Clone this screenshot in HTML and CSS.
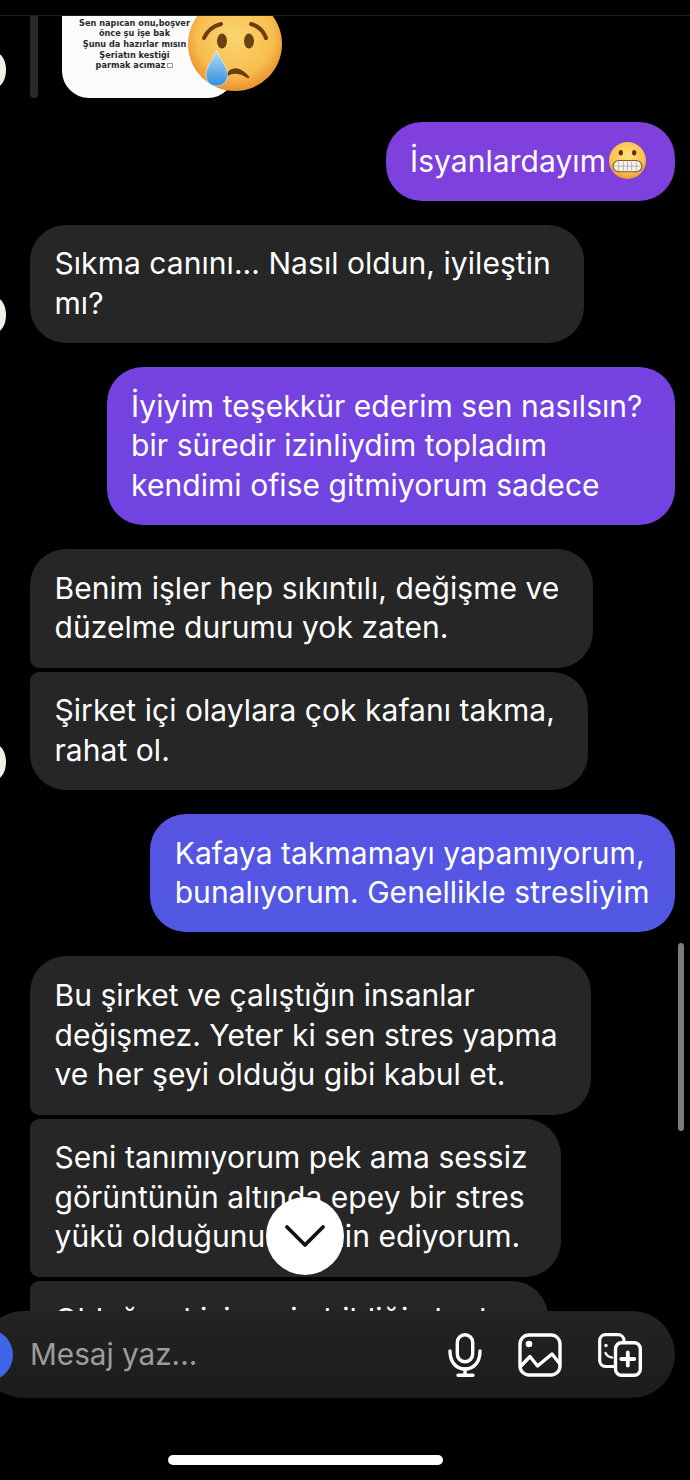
FILE: index.html
```html
<!DOCTYPE html>
<html lang="tr">
<head>
<meta charset="utf-8">
<title>Mesajlar</title>
<link rel="stylesheet" href="styles.css">
</head>
<body>
<div class="screen">
  <div class="thread">
    <div class="reply-row">
      <div class="reply-bar"></div>
      <div class="story">
        <div class="story-card">
          <p>Sen napıcan onu,boşver</p>
          <p>önce şu işe bak</p>
          <p>Şunu da hazırlar mısın</p>
          <p>Şeriatın kestiği</p>
          <p>parmak acımaz<span class="tofu"></span></p>
        </div>
        <svg class="cry" viewBox="0 0 94 76" aria-hidden="true">
          <defs>
            <radialGradient id="face" cx="0.5" cy="0.42" r="0.6">
              <stop offset="0" stop-color="#fad672"/>
              <stop offset="0.68" stop-color="#f8bd4e"/>
              <stop offset="1" stop-color="#e98a2a"/>
            </radialGradient>
            <linearGradient id="drop" x1="0" y1="0" x2="0" y2="1">
              <stop offset="0" stop-color="#b5e0f5"/>
              <stop offset="1" stop-color="#2f8ee0"/>
            </linearGradient>
          </defs>
          <circle cx="47" cy="28" r="47" fill="url(#face)"/>
          <path d="M16 22 Q21 11 33 8" fill="none" stroke="#6a3d10" stroke-width="4" stroke-linecap="round"/>
          <path d="M78 22 Q74 11 63 8" fill="none" stroke="#6a3d10" stroke-width="4" stroke-linecap="round"/>
          <ellipse cx="34" cy="25" rx="5" ry="7.500" fill="#6a4212"/>
          <ellipse cx="61" cy="25" rx="5" ry="7.500" fill="#6a4212"/>
          <path d="M39 59 Q47 47 60 61 Q48 53 39 59Z" fill="#6a3d10" stroke="#6a3d10" stroke-width="2.500" stroke-linejoin="round"/>
          <path d="M28.500 34 C32 44 39.500 50 39.500 59 C39.500 66 34.500 70 28.500 70 C22.500 70 18 66 18 59 C18 50 25 44 28.500 34Z" fill="url(#drop)" stroke="#e8f4fa" stroke-width="0.600"/>
        </svg>
      </div>
    </div>

    <div class="msg sent first">İsyanlardayım<svg class="grimace" viewBox="0 0 36 36" aria-hidden="true">
        <defs>
          <radialGradient id="gface" cx="0.5" cy="0.38" r="0.65">
            <stop offset="0" stop-color="#fde27c"/>
            <stop offset="0.7" stop-color="#fbbf4c"/>
            <stop offset="1" stop-color="#ec9030"/>
          </radialGradient>
        </defs>
        <circle cx="18" cy="18" r="18" fill="url(#gface)"/>
        <ellipse cx="11.500" cy="10.500" rx="2.100" ry="2.600" fill="#5c3410"/>
        <ellipse cx="24.500" cy="10.500" rx="2.100" ry="2.600" fill="#5c3410"/>
        <rect x="4" y="18" width="28" height="11" rx="5.500" fill="#f5f2ec" stroke="#7a5a30" stroke-width="1.100"/>
        <path d="M4.500 23.500H31.500M9.500 18.500V28.500M14 18V29M18 18V29M22 18V29M26.500 18.500V28.500" stroke="#a8a398" stroke-width="0.700" fill="none"/>
      </svg></div>

    <div class="msg recv gap">Sıkma canını... Nasıl oldun, iyileştin<br>mı?</div>

    <div class="msg sent gap">İyiyim teşekkür ederim sen nasılsın?<br>bir süredir izinliydim topladım<br>kendimi ofise gitmiyorum sadece</div>

    <div class="msg recv gap group-start">Benim işler hep sıkıntılı, değişme ve<br>düzelme durumu yok zaten.</div>
    <div class="msg recv tight group-end">Şirket içi olaylara çok kafanı takma,<br>rahat ol.</div>

    <div class="msg sent snug gap">Kafaya takmamayı yapamıyorum,<br>bunalıyorum. Genellikle stresliyim</div>

    <div class="msg recv gap group-start">Bu şirket ve çalıştığın insanlar<br>değişmez. Yeter ki sen stres yapma<br>ve her şeyi olduğu gibi kabul et.</div>
    <div class="msg recv tight group-mid">Seni tanımıyorum pek ama sessiz<br>görüntünün altında epey bir stres<br>yükü olduğunu tahmin ediyorum.</div>
    <div class="msg recv tight group-end">Olduğun kişi senin bildiğin kadar</div>
  </div>

  <div class="topline"></div>
  <div class="avatar avatar-a"></div>
  <div class="avatar avatar-b"></div>
  <div class="avatar avatar-c"></div>
  <div class="scrollbar"></div>

  <div class="jump">
    <svg viewBox="0 0 44 26" aria-hidden="true"><path d="M4 4 L22 22 L40 4" fill="none" stroke="#111" stroke-width="3.800" stroke-linecap="round" stroke-linejoin="round"/></svg>
  </div>

  <div class="composer">
    <div class="camera"></div>
    <div class="placeholder">Mesaj yaz...</div>
    <div class="tools">
      <svg class="tool mic" viewBox="0 0 34 44" aria-hidden="true">
        <rect x="9.300" y="1.700" width="15.400" height="27" rx="7.700" fill="none" stroke="#fff" stroke-width="3.400"/>
        <path d="M2 18 C2 29 8 36 17 36 C26 36 32 29 32 18" fill="none" stroke="#fff" stroke-width="3.400" stroke-linecap="round"/>
        <path d="M17 36V42M10 42.300H25" fill="none" stroke="#fff" stroke-width="3.400" stroke-linecap="round"/>
      </svg>
      <svg class="tool gallery" viewBox="0 0 44 44" aria-hidden="true">
        <rect x="2" y="2" width="40" height="40" rx="9" fill="none" stroke="#fff" stroke-width="3.400"/>
        <circle cx="11" cy="11" r="3.300" fill="#fff"/>
        <path d="M3 33 L12 23.500 L19.500 33 L34 21 L42 31" fill="none" stroke="#fff" stroke-width="3.400" stroke-linejoin="round"/>
      </svg>
      <svg class="tool sticker" viewBox="0 0 44 44" aria-hidden="true">
        <path d="M15.500 33.500H7.500 A6 6 0 0 1 1.700 27.500V7.500 A6 6 0 0 1 7.500 1.700H20 A6 6 0 0 1 26 7.500" fill="none" stroke="#fff" stroke-width="3.200" stroke-linecap="round"/>
        <rect x="17.500" y="9.700" width="24.800" height="32.600" rx="6" fill="none" stroke="#fff" stroke-width="3.400"/>
        <path d="M29.800 19.500V32.500M23.300 26H36.300" fill="none" stroke="#fff" stroke-width="3.800" stroke-linecap="round"/>
        <circle cx="8" cy="12.500" r="1.700" fill="#fff"/>
        <path d="M7.500 20 Q9.500 24 14 24.500" fill="none" stroke="#fff" stroke-width="2.400" stroke-linecap="round"/>
      </svg>
    </div>
  </div>

  <div class="home-bar"></div>
</div>
</body>
</html>
```

FILE: styles.css
```css
* { box-sizing: border-box; }

html, body {
  margin: 0;
  padding: 0;
  background: #000;
}

.screen {
  position: relative;
  width: 690px;
  height: 1480px;
  overflow: hidden;
  background: #000;
  font-family: Inter, "Noto Sans", sans-serif;
  color: #fff;
}

.thread {
  display: flex;
  flex-direction: column;
  align-items: flex-start;
  padding: 16px 15px 0 30px;
  height: 1311px;
  overflow: hidden;
}

.reply-row {
  display: flex;
  gap: 24px;
  height: 82px;
  flex: none;
}

.reply-bar {
  width: 8px;
  height: 82px;
  background: #2a2a2a;
  border-radius: 0 0 4px 4px;
}

.story {
  position: relative;
  width: 220px;
  height: 82px;
  overflow: hidden;
}

.story-card {
  width: 173px;
  height: 82px;
  background: #fbfbfb;
  border-radius: 0 0 27px 27px;
  color: #2b2b2b;
  font-family: "DejaVu Sans", sans-serif;
  font-size: 8.200px;
  font-weight: 700;
  line-height: 10.700px;
  text-align: center;
  padding: 1.500px 28px 0 0;
}

.story-card p {
  margin: 0;
  white-space: nowrap;
}

.tofu {
  display: inline-block;
  width: 6px;
  height: 5px;
  margin-left: 2px;
  border: 1px solid #999;
}

.cry {
  position: absolute;
  left: 126px;
  top: 0;
  width: 94px;
  height: 76px;
}

.msg {
  flex: none;
  padding: 19.500px 33.500px 19.500px 24.500px;
  font-size: 30px;
  line-height: 39.700px;
  letter-spacing: 0.050px;
  border-radius: 36px;
  white-space: nowrap;
}

.recv {
  background: #262626;
}

.sent {
  align-self: flex-end;
  padding-right: 32.500px;
  background: linear-gradient(180deg, #8040dc 110px, #7044e2 520px, #4f59e4 940px) fixed;
}

.snug { padding-right: 25.500px; }

.first { margin-top: 24px; }
.gap { margin-top: 24px; }
.tight { margin-top: 4px; }

.group-start { border-bottom-left-radius: 9px; }
.group-mid { border-top-left-radius: 9px; border-bottom-left-radius: 9px; }
.group-end { border-top-left-radius: 9px; }

.grimace {
  width: 37px;
  height: 37px;
  margin: -6px -3.500px -6px 3px;
  vertical-align: -1px;
}

.topline {
  position: absolute;
  left: 0;
  right: 0;
  top: 15px;
  height: 1px;
  background: #1c1c1c;
}

.avatar {
  position: absolute;
  left: -14px;
  width: 20px;
  height: 34px;
  border-radius: 50%;
  background: linear-gradient(135deg, #dff2f4, #f5f3e0);
}

.avatar-a { top: 53px; }
.avatar-b { top: 298px; }
.avatar-c { top: 745px; }

.scrollbar {
  position: absolute;
  left: 678px;
  top: 943px;
  width: 6px;
  height: 188px;
  border-radius: 3px;
  background: #7c7c7c;
}

.jump {
  position: absolute;
  left: 266px;
  top: 1197px;
  width: 78px;
  height: 78px;
  border-radius: 50%;
  background: #fff;
  display: flex;
  align-items: center;
  justify-content: center;
}

.jump svg {
  width: 44px;
  height: 26px;
}

.composer {
  position: absolute;
  left: -20px;
  top: 1311px;
  width: 695px;
  height: 87px;
  border-radius: 43.500px;
  background: linear-gradient(180deg, #232323, #1c1c1c);
  display: flex;
  align-items: center;
}

.camera {
  width: 52px;
  height: 52px;
  margin-left: -19px;
  border-radius: 50%;
  background: #3f66e6;
  flex: none;
}

.placeholder {
  margin: -2px 0 0 17px;
  font-size: 29.700px;
  color: #9c9c9c;
  flex: 1;
}

.tools {
  display: flex;
  align-items: center;
  gap: 36px;
  padding-right: 33px;
}

.tool {
  display: block;
  flex: none;
}

.mic { width: 34px; height: 44px; }
.gallery { width: 44px; height: 44px; }
.sticker { width: 44px; height: 44px; }

.home-bar {
  position: absolute;
  left: 168px;
  top: 1455px;
  width: 275px;
  height: 10px;
  border-radius: 5px;
  background: #fff;
}
```
